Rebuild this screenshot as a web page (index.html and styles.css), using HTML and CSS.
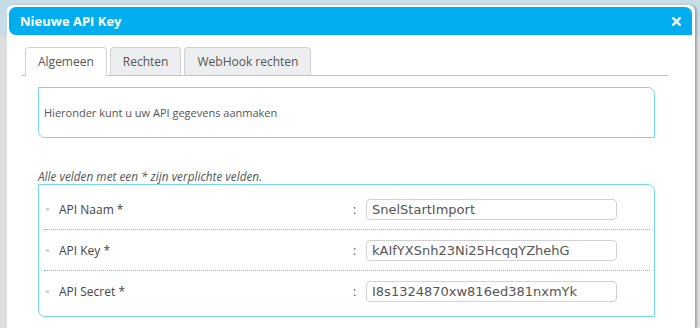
FILE: index.html
```html
<!DOCTYPE html>
<html lang="nl">
<head>
  <meta charset="UTF-8" />
  <title>Nieuwe API Key</title>
  <link rel="stylesheet" href="styles.css">
</head>
<body>

  <div class="dialog">
    <div class="dialog-header">
      <span class="dialog-title">Nieuwe API Key</span>
      <svg class="close-icon" width="9" height="9" viewBox="0 0 9 9">
        <path d="M1.2 1.2 L7.8 7.8 M7.8 1.2 L1.2 7.8" stroke="#e6f2f8" stroke-width="2.6" stroke-linecap="square" />
      </svg>
    </div>

    <div class="dialog-body">
      <ul class="tabs">
        <li class="tab active">Algemeen</li>
        <li class="tab">Rechten</li>
        <li class="tab">WebHook rechten</li>
      </ul>

      <div class="tab-content">
        <div class="panel info">Hieronder kunt u uw API gegevens aanmaken</div>

        <p class="required-note">Alle velden met een * zijn verplichte velden.</p>

        <div class="panel fields">
          <div class="field-row">
            <label class="field-label">API Naam *</label>
            <span class="field-sep">:</span>
            <input class="field-input" type="text" value="SnelStartImport" />
          </div>
          <div class="field-row">
            <label class="field-label">API Key *</label>
            <span class="field-sep">:</span>
            <input class="field-input" type="text" value="kAIfYXSnh23Ni25HcqqYZhehG" />
          </div>
          <div class="field-row">
            <label class="field-label">API Secret *</label>
            <span class="field-sep">:</span>
            <input class="field-input" type="text" value="I8s1324870xw816ed381nxmYk" />
          </div>
        </div>
      </div>
    </div>
  </div>

</body>
</html>
```

FILE: styles.css
```css
:root {
  --blue: #00adef;
  --panel-border: #72d6f4;
  --text: #555555;
}

body {
  box-sizing: border-box;
  margin: 0;
  padding: 5px 5px 0 7px;
  height: 328px;
  overflow: hidden;
  font-family: 'Open Sans', sans-serif;
  color: var(--text);
  background: linear-gradient(#c6dde8 0, #c6dde8 36px, #dcdedf 36px);
}

/* Dialoog */
.dialog {
  box-sizing: border-box;
  height: 100%;
  background-color: #ffffff;
  border-radius: 6px 6px 0 0;
  box-shadow: 2px 0 2px rgba(0, 0, 0, 0.25);
  padding: 2px 3px 0 2px;
}

.dialog-header {
  display: flex;
  align-items: center;
  justify-content: space-between;
  height: 28px;
  padding: 0 11px;
  background-color: var(--blue);
  border-radius: 7px 7px 0 7px;
}

.dialog-title {
  color: #ffffff;
  font-weight: 700;
  font-size: 13px;
}

.close-icon {
  display: block;
}

.dialog-body {
  padding: 12px 24px 0 13px;
}

/* Tabs */
.tabs {
  display: flex;
  gap: 3px;
  list-style: none;
  margin: 0;
  padding: 0 0 0 3px;
  border-bottom: 1px solid #8fd8f0;
}

.tab {
  height: 27px;
  line-height: 27px;
  padding: 0 12px;
  font-size: 12px;
  color: #555;
  background-color: #eceeef;
  border: 1px solid #cfd3d5;
  border-bottom: none;
  border-radius: 4px 4px 0 0;
}

.tab.active {
  background-color: #ffffff;
  height: 28px;
  margin-bottom: -1px;
}

/* Inhoud */
.tab-content {
  padding: 11px 13px 0 16px;
}

.panel {
  border: 1px solid var(--panel-border);
  border-radius: 0 7px 0 7px;
}

.info {
  height: 49px;
  display: flex;
  align-items: center;
  padding-left: 5px;
  font-size: 11px;
}

.required-note {
  margin: 31px 0 1px;
  font-size: 11.8px;
  line-height: 14px;
  font-style: italic;
}

.fields {
  padding: 4px 4px 5px 5px;
}

.field-row {
  display: grid;
  grid-template-columns: 309px 13px 252px;
  align-items: center;
  height: 40px;
  border-bottom: 1px dotted #5cc6e6;
}

.field-row:last-child {
  border-bottom: none;
}

.field-label {
  position: relative;
  padding-left: 15px;
  font-size: 12px;
  color: #444;
}

.field-label::before {
  content: '';
  position: absolute;
  left: 2px;
  top: 7px;
  width: 3px;
  height: 3px;
  background-color: #d4d4d4;
}

.field-sep {
  font-size: 12px;
  color: #555;
}

.field-input {
  box-sizing: border-box;
  width: 251px;
  height: 21px;
  margin: 0;
  padding: 0 5px;
  font-family: 'DejaVu Sans', Verdana, sans-serif;
  font-size: 13px;
  color: #555;
  border: 1px solid #d2d2d2;
  border-radius: 4px;
  background-color: #ffffff;
}
```
